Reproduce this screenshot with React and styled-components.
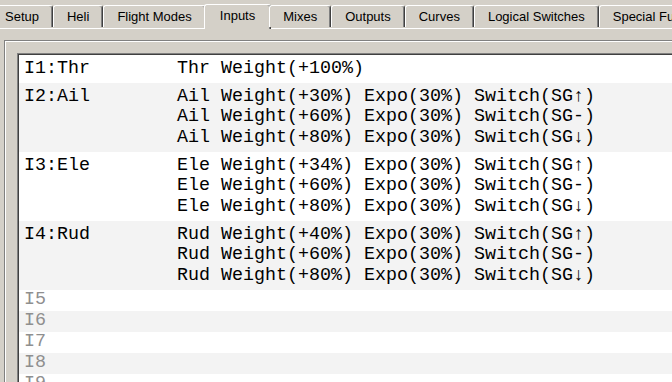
import React from 'react'
import styled, { createGlobalStyle } from 'styled-components'

const GlobalStyle = createGlobalStyle`
  html, body {
    margin: 0;
    padding: 0;
    background: #d4d0c8;
    overflow: hidden;
  }
`

const Window = styled.div`
  width: 672px;
  height: 382px;
  overflow: hidden;
  background: #d4d0c8;
  font-family: "Liberation Sans", Arial, sans-serif;
`

const TabBar = styled.div`
  display: flex;
  align-items: flex-end;
  height: 28px;
  margin-left: -9px;
  position: relative;
  z-index: 1;
`

const Tab = styled.div`
  box-sizing: border-box;
  flex: none;
  height: ${p => (p.$active ? '25px' : '22px')};
  margin: ${p => (p.$active ? '0 -2px -1px' : '0 0 1px')};
  padding: ${p => (p.$active ? '0 15px 3px' : '0 13px')};
  display: flex;
  align-items: center;
  font-size: 13px;
  color: #000;
  white-space: nowrap;
  background: #d4d0c8;
  border-top: 1px solid #fff;
  border-left: 1px solid #fff;
  border-right: 1px solid #404040;
  border-radius: 3px 3px 0 0;
  box-shadow: inset -1px 0 0 #808080;
`

const Pane = styled.div`
  border-top: 1px solid #fff;
  padding: 11px 0 0 4px;
`

const GroupBox = styled.div`
  width: 760px;
  height: 400px;
  border-top: 1px solid #808080;
  border-left: 1px solid #808080;
  box-shadow: inset 1px 1px 0 #fff;
  padding: 12px 0 0 12px;
`

const List = styled.div`
  height: 400px;
  background: #fff;
  border-top: 1px solid #808080;
  border-left: 1px solid #808080;
  box-shadow: inset 1px 1px 0 #404040;
  padding: 1px 0 0 1px;
  font-family: "Liberation Mono", "Courier New", monospace;
  font-size: 18.33px;
  line-height: 20.5px;
`

const Row = styled.div`
  display: grid;
  grid-template-columns: 153px 1fr;
  padding: ${p => (p.$empty ? '0 0 0.5px 5px' : '3.5px 0 4px 5px')};
  background: ${p => (p.$alt ? '#f3f3f3' : '#fff')};
`

const Name = styled.div`
  color: ${p => (p.$empty ? '#8f8f8f' : '#000')};
  white-space: pre;
`

const Lines = styled.div`
  display: flex;
  flex-direction: column;
  color: #000;
`

const Line = styled.div`
  white-space: pre;
`

const tabs = ['Setup', 'Heli', 'Flight Modes', 'Inputs', 'Mixes', 'Outputs', 'Curves', 'Logical Switches', 'Special Functions']

const sw = ['SG\u2191', 'SG-', 'SG\u2193']

const inputs = [
  { name: 'I1:Thr', lines: ['Thr Weight(+100%)'] },
  { name: 'I2:Ail', lines: [30, 60, 80].map((w, i) => `Ail Weight(+${w}%) Expo(30%) Switch(${sw[i]})`) },
  { name: 'I3:Ele', lines: [34, 60, 80].map((w, i) => `Ele Weight(+${w}%) Expo(30%) Switch(${sw[i]})`) },
  { name: 'I4:Rud', lines: [40, 60, 80].map((w, i) => `Rud Weight(+${w}%) Expo(30%) Switch(${sw[i]})`) },
  { name: 'I5', lines: [] },
  { name: 'I6', lines: [] },
  { name: 'I7', lines: [] },
  { name: 'I8', lines: [] },
  { name: 'I9', lines: [] },
]

export default function App() {
  return (
    <Window>
      <GlobalStyle />
      <TabBar>
        {tabs.map(t => (
          <Tab key={t} $active={t === 'Inputs'}>{t}</Tab>
        ))}
      </TabBar>
      <Pane>
        <GroupBox>
          <List>
            {inputs.map((inp, i) => {
              const empty = inp.lines.length === 0
              return (
                <Row key={inp.name} $alt={i % 2 === 1} $empty={empty}>
                  <Name $empty={empty}>{inp.name}</Name>
                  <Lines>
                    {inp.lines.map((l, j) => (
                      <Line key={j}>{l}</Line>
                    ))}
                  </Lines>
                </Row>
              )
            })}
          </List>
        </GroupBox>
      </Pane>
    </Window>
  )
}
